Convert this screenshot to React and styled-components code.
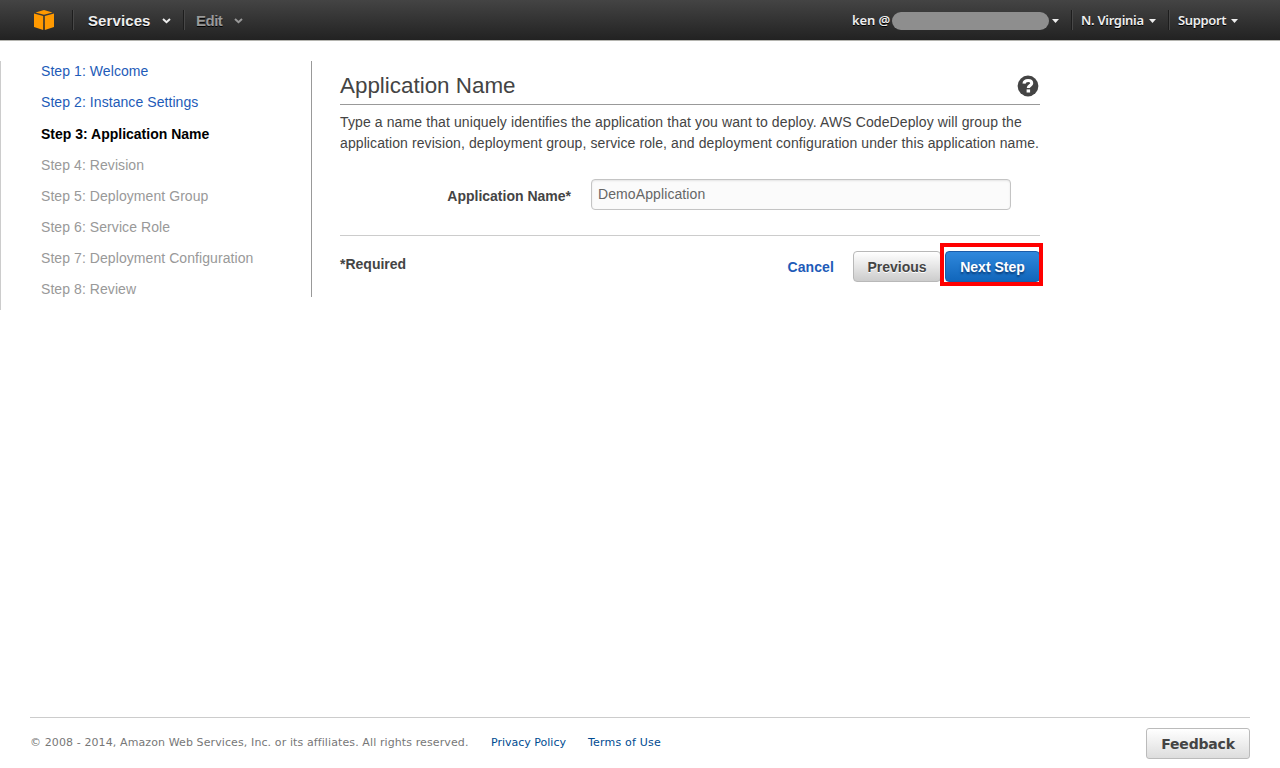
import React from "react";
import styled, { createGlobalStyle } from "styled-components";

const sans = '"Liberation Sans", Arial, sans-serif';
const wide = '"DejaVu Sans", Verdana, sans-serif';
const menu = '"Noto Sans", "Open Sans", sans-serif';

const GlobalStyle = createGlobalStyle`
  * { box-sizing: border-box; }
  body { margin: 0; background: #fff; color: #444; font: 14px ${sans}; }
  a { text-decoration: none; }
`;

const Page = styled.div`
  display: flex;
  flex-direction: column;
  height: 768px;
  overflow: hidden;
`;

const TopBar = styled.header`
  display: flex;
  align-items: center;
  flex: none;
  height: 41px;
  padding: 0 42px 0 33px;
  background: linear-gradient(#444, #222);
  border-bottom: 1px solid #b5b5b0;
`;

const Logo = styled.svg`
  width: 22px;
  height: 22px;
  margin-right: 17px;
`;

const Divider = styled.span`
  width: 2px;
  height: 20px;
  border-left: 1px solid #1d1d1d;
  border-right: 1px solid #484848;
`;

const MainMenu = styled.a`
  display: flex;
  align-items: center;
  justify-content: space-between;
  width: ${(p) => p.$width}px;
  margin: 0 ${(p) => p.$after}px 0 ${(p) => p.$before}px;
  color: ${(p) => (p.$dim ? "#999" : "#eee")};
  font: bold 15px ${sans};
  letter-spacing: ${(p) => p.$tracking}px;
  text-shadow: 0 1px 0 #000;
`;

const Spacer = styled.span`
  flex: 1;
`;

const AccountMenu = styled.a`
  display: flex;
  align-items: center;
  justify-content: space-between;
  width: ${(p) => p.$width}px;
  margin: 0 ${(p) => p.$after || 0}px 0 ${(p) => p.$before || 0}px;
  color: #eee;
  font: 600 13px ${menu};
  letter-spacing: ${(p) => p.$tracking || 0}px;
  text-shadow: 0 1px 0 #000;
`;

const Redacted = styled.span`
  width: 157px;
  height: 18px;
  margin: 1px 1px 0 0;
  border-radius: 9px;
  background: #8e8e8e;
`;

const Chevron = styled.svg`
  width: 9px;
  height: 6px;
  margin-top: 2px;
  fill: none;
  stroke: currentColor;
  stroke-width: 2;
`;

const Caret = styled.svg`
  width: 7px;
  height: 4px;
  margin-top: 2px;
  fill: #eee;
`;

const Body = styled.div`
  display: flex;
  align-items: flex-start;
  flex: none;
  width: 1041px;
  height: 249px;
  margin-top: 20px;
  border-left: 1px solid #ccc;
`;

const Steps = styled.nav`
  display: flex;
  flex-direction: column;
  width: 311px;
  height: 236px;
  padding: 1px 0 0 40px;
  border-right: 1px solid #999;
`;

const stepColors = { done: "#1e5bb8", current: "#000", pending: "#999" };

const Step = styled.a`
  flex: none;
  height: ${(p) => (p.$state === "done" ? 31.4 : 31.05)}px;
  line-height: 19px;
  color: ${(p) => stepColors[p.$state]};
  font-weight: ${(p) => (p.$state === "current" ? "bold" : "normal")};
  letter-spacing: ${(p) => (p.$state === "current" ? 0 : 0.07)}px;
`;

const Content = styled.main`
  display: flex;
  flex-direction: column;
  width: 700px;
  margin-left: 28px;
`;

const TitleRow = styled.div`
  display: flex;
  justify-content: space-between;
  height: 44px;
  padding: 11px 1px 0 0;
  border-bottom: 1px solid #999;
`;

const Title = styled.h1`
  margin: 0;
  color: #444;
  font: 22.4px/27px ${sans};
`;

const Help = styled.svg`
  width: 22px;
  height: 22px;
  margin-top: 3px;
`;

const Description = styled.p`
  margin: 7px 0 0;
  line-height: 21px;
  white-space: nowrap;
`;

const Line = styled.span`
  display: block;
  letter-spacing: ${(p) => p.$tracking}px;
`;

const Field = styled.label`
  display: flex;
  align-items: center;
  justify-content: flex-end;
  gap: 20px;
  height: 31px;
  margin: 25px 29px 25px 0;
  font-weight: bold;
`;

const FieldLabel = styled.span`
  padding-top: 3px;
`;

const Input = styled.input`
  width: 420px;
  height: 31px;
  padding: 0 6px 1px;
  border: 1px solid #c4c4c4;
  border-radius: 4px;
  background: #fbfbfb;
  box-shadow: inset 0 1px 2px #e4e4e4;
  color: #666;
  font: 14px ${sans};
  letter-spacing: 0.1px;
  outline: none;
`;

const Actions = styled.div`
  display: flex;
  align-items: flex-start;
  padding-top: 15px;
  border-top: 1px solid #ccc;
  font-weight: bold;
`;

const Required = styled.span`
  flex: 1;
  line-height: 27px;
`;

const Cancel = styled.a`
  margin-right: 19px;
  color: #1e5bb8;
  letter-spacing: 0.1px;
  line-height: 32px;
`;

const Button = styled.button`
  width: ${(p) => p.$width}px;
  height: 31px;
  padding: 1px 0 0;
  border: 1px solid ${(p) => (p.$primary ? "#1b5ca8" : "#b8b8b8")};
  border-radius: 4px;
  background: ${(p) => (p.$primary ? "linear-gradient(#2f88dc, #1166bb)" : "linear-gradient(#fff, #ccc)")};
  color: ${(p) => (p.$primary ? "#fff" : "#444")};
  font: bold 14px ${sans};
  text-shadow: ${(p) => (p.$primary ? "0 2px 2px #0a3c78" : "0 1px 0 #fff")};
`;

const Highlight = styled.div`
  position: relative;
  margin-left: 4px;

  &::after {
    content: "";
    position: absolute;
    inset: -8px -3px -4px -5px;
    border: 4px solid #f00;
    pointer-events: none;
  }
`;

const Footer = styled.footer`
  display: flex;
  align-items: flex-start;
  height: 51px;
  margin: auto 30px 0;
  border-top: 1px solid #ccc;
  font: 11px/14px ${wide};
  color: #777;
`;

const Copyright = styled.span`
  margin-top: 18px;
  width: 461px;
  letter-spacing: 0.105px;
  white-space: nowrap;
`;

const FooterLink = styled.a`
  margin-top: 18px;
  width: 97px;
  color: #004b91;
  letter-spacing: ${(p) => p.$tracking || 0}px;
  white-space: nowrap;
`;

const Feedback = styled.button`
  width: 104px;
  height: 31px;
  margin: 10px 0 0 auto;
  padding: 0;
  border: 1px solid #bbb;
  border-radius: 3px;
  background: linear-gradient(#fff, #ddd);
  color: #444;
  font: bold 14px ${wide};
  letter-spacing: -0.2px;
`;

const steps = [
  ["Step 1: Welcome", "done"],
  ["Step 2: Instance Settings", "done"],
  ["Step 3: Application Name", "current"],
  ["Step 4: Revision", "pending"],
  ["Step 5: Deployment Group", "pending"],
  ["Step 6: Service Role", "pending"],
  ["Step 7: Deployment Configuration", "pending"],
  ["Step 8: Review", "pending"],
];

const ChevronIcon = () => (
  <Chevron viewBox="0 0 9 6">
    <path d="M1 1l3.5 3.2L8 1" />
  </Chevron>
);

const CaretIcon = () => (
  <Caret viewBox="0 0 7 4">
    <path d="M0 0h7L3.5 4z" />
  </Caret>
);

export default function App() {
  return (
    <Page>
      <GlobalStyle />
      <TopBar>
        <Logo viewBox="0 0 22 22">
          <g fill="#f90">
            <path d="M11 1l8.5 2.400L11 5.800 2.500 3.400z" />
            <path d="M1 4.500l9.200 2.500V21L1 18z" />
            <path d="M21 4.500l-9.200 2.500V21L21 18z" />
          </g>
        </Logo>
        <Divider />
        <MainMenu $width={83} $before={14} $after={12} $tracking={0.1}>
          Services <ChevronIcon />
        </MainMenu>
        <Divider />
        <MainMenu $width={47} $before={11} $after={0} $tracking={-0.5} $dim>
          Edit <ChevronIcon />
        </MainMenu>
        <Spacer />
        <AccountMenu $width={207} $after={12} $tracking={-0.1}>
          ken @ <Redacted /> <CaretIcon />
        </AccountMenu>
        <Divider />
        <AccountMenu $width={75} $before={8} $after={12} $tracking={-0.3}>
          N. Virginia <CaretIcon />
        </AccountMenu>
        <Divider />
        <AccountMenu $width={60} $before={8} $tracking={-0.35}>
          Support <CaretIcon />
        </AccountMenu>
      </TopBar>
      <Body>
        <Steps>
          {steps.map(([label, state]) => (
            <Step key={label} $state={state}>{label}</Step>
          ))}
        </Steps>
        <Content>
          <TitleRow>
            <Title>Application Name</Title>
            <Help viewBox="0 0 22 22">
              <circle cx="11" cy="11" r="10.400" fill="#444" />
              <path d="M7 8.700C7.200 6.300 8.800 5.500 11.100 5.500c2.200 0 3.600 1.100 3.600 2.700 0 2.600-3.400 2.300-3.400 4.800" fill="none" stroke="#fff" strokeWidth="3.100" />
              <path d="M9.600 14.400h3.500v3.100H9.600z" fill="#fff" />
            </Help>
          </TitleRow>
          <Description>
            <Line $tracking={0.11}>Type a name that uniquely identifies the application that you want to deploy. AWS CodeDeploy will group the</Line>
            <Line $tracking={0.093}>application revision, deployment group, service role, and deployment configuration under this application name.</Line>
          </Description>
          <Field>
            <FieldLabel>Application Name*</FieldLabel>
            <Input defaultValue="DemoApplication" />
          </Field>
          <Actions>
            <Required>*Required</Required>
            <Cancel>Cancel</Cancel>
            <Button $width={88}>Previous</Button>
            <Highlight>
              <Button $width={95} $primary>Next Step</Button>
            </Highlight>
          </Actions>
        </Content>
      </Body>
      <Footer>
        <Copyright>© 2008 - 2014, Amazon Web Services, Inc. or its affiliates. All rights reserved.</Copyright>
        <FooterLink>Privacy Policy</FooterLink>
        <FooterLink $tracking={0.2}>Terms of Use</FooterLink>
        <Feedback>Feedback</Feedback>
      </Footer>
    </Page>
  );
}
